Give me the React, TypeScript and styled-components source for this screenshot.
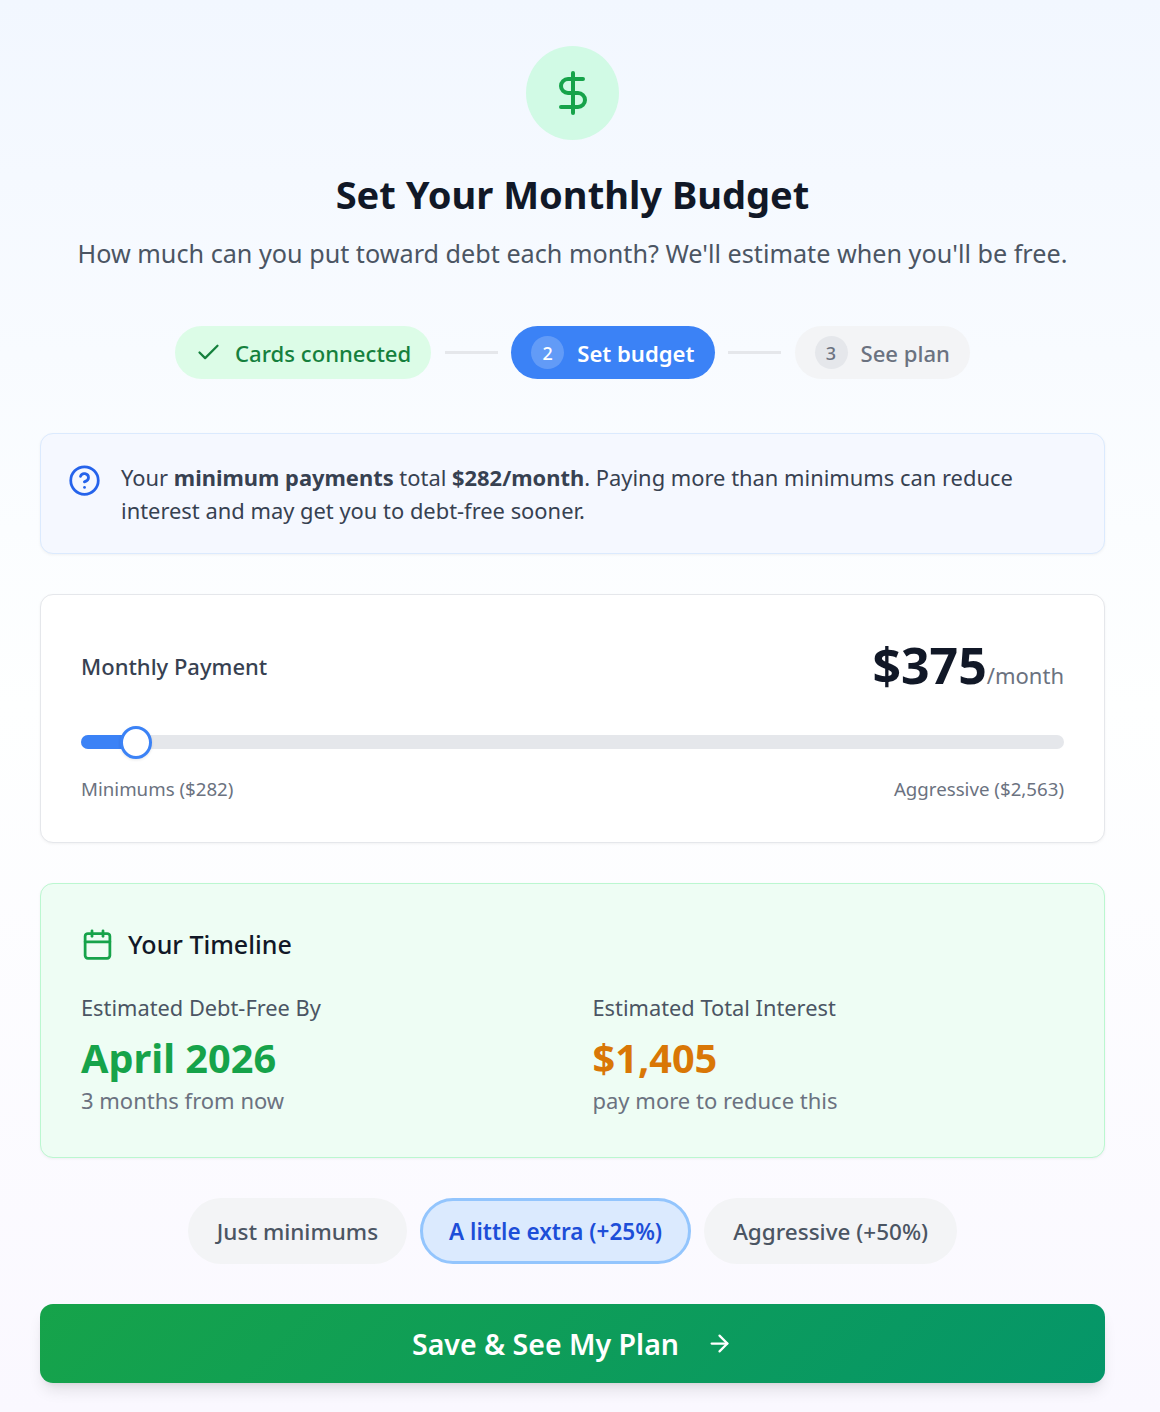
import React from 'react'
import styled, { createGlobalStyle } from 'styled-components'
import { ArrowRight, Calendar, Check, CircleHelp, DollarSign } from 'lucide-react'

const GlobalStyle = createGlobalStyle`
    html, body {
        margin: 0;
        padding: 0;
    }
    body {
        font-family: "Noto Sans", "Open Sans", sans-serif;
        color: #111827;
    }
    * {
        box-sizing: border-box;
    }
`

const Page = styled.div`
    width: 1160px;
    height: 1412px;
    overflow: hidden;
    padding: 46px 55px 0 40px;
    background: linear-gradient(180deg, #f2f7ff 0%, #feffff 50%, #faf8ff 100%);
`

const Header = styled.header`
    display: flex;
    flex-direction: column;
    align-items: center;
`

const IconCircle = styled.div`
    width: 93px;
    height: 94px;
    border-radius: 50%;
    background: #d1fae5;
    color: #16a34a;
    display: flex;
    align-items: center;
    justify-content: center;
`

const Title = styled.h1`
    margin: 29px 0 0;
    font-size: 38.1px;
    line-height: 50px;
    font-weight: 700;
    color: #111827;
`

const Subtitle = styled.p`
    margin: 16px 0 0;
    font-size: 25.2px;
    line-height: 36px;
    color: #4b5563;
`

const Stepper = styled.div`
    margin-top: 55px;
    display: flex;
    justify-content: center;
    align-items: center;
    gap: 13.5px;
`

type StepState = 'done' | 'active' | 'todo'

const stepColors = {
    done: { bg: '#dcfce7', fg: '#15803d' },
    active: { bg: '#3b82f6', fg: '#ffffff' },
    todo: { bg: '#f3f4f6', fg: '#6b7280' },
}

const Step = styled.div<{ $state: StepState }>`
    height: 53px;
    padding: 0 20px;
    border-radius: 27px;
    display: flex;
    align-items: center;
    gap: 13px;
    font-size: 22.1px;
    font-weight: ${({ $state }) => ($state === 'active' ? 600 : 500)};
    background: ${({ $state }) => stepColors[$state].bg};
    color: ${({ $state }) => stepColors[$state].fg};
`

const StepNumber = styled.span<{ $active?: boolean }>`
    width: 33px;
    height: 33px;
    border-radius: 50%;
    display: flex;
    align-items: center;
    justify-content: center;
    font-size: 18px;
    font-weight: 500;
    background: ${({ $active }) => ($active ? 'rgba(255, 255, 255, 0.2)' : '#e5e7eb')};
`

const StepLine = styled.div`
    width: 53px;
    height: 3px;
    background: #e5e7eb;
`

const InfoBox = styled.div`
    margin-top: 54px;
    height: 121px;
    padding: 27px;
    display: flex;
    gap: 20px;
    background: #f5f8ff;
    border: 1px solid #dbeafe;
    border-radius: 13px;
    box-shadow: 0 1px 3px rgba(0, 0, 0, 0.05);
    color: #374151;
    font-size: 21.9px;
    line-height: 33px;
`

const InfoIcon = styled.div`
    flex: none;
    color: #2563eb;
    padding-top: 3px;
    height: 33px;
`

const Card = styled.section`
    margin-top: 40px;
    height: 249px;
    padding: 40px;
    background: #ffffff;
    border: 1px solid #e5e7eb;
    border-radius: 13px;
    box-shadow: 0 1px 3px rgba(0, 0, 0, 0.05);
`

const PaymentRow = styled.div`
    display: flex;
    justify-content: space-between;
    align-items: flex-start;
    height: 64px;
`

const PaymentLabel = styled.div`
    font-size: 22px;
    font-weight: 500;
    line-height: 62px;
    color: #374151;
`

const PaymentValue = styled.div`
    display: flex;
    align-items: baseline;
    font-size: 50px;
    line-height: 60px;
    font-weight: 700;
    color: #111827;
`

const PerMonth = styled.span`
    font-size: 22px;
    font-weight: 400;
    color: #6b7280;
`

const SliderTrack = styled.div`
    position: relative;
    margin-top: 36px;
    height: 14px;
    border-radius: 7px;
    background: #e5e7eb;
`

const SliderFill = styled.div`
    height: 100%;
    border-radius: 7px 0 0 7px;
    background: #3b82f6;
`

const SliderThumb = styled.div`
    position: absolute;
    top: 50%;
    width: 32px;
    height: 33px;
    margin: -16.5px 0 0 -16px;
    border-radius: 50%;
    background: #ffffff;
    border: 3px solid #3b82f6;
    box-shadow: 0 1px 3px rgba(0, 0, 0, 0.1);
`

const RangeLabels = styled.div`
    margin-top: 26px;
    display: flex;
    justify-content: space-between;
    font-size: 18.7px;
    line-height: 27px;
    color: #6b7280;
`

const TimelineCard = styled.section`
    margin-top: 40px;
    height: 275px;
    padding: 40px;
    background: #eefdf4;
    border: 1px solid #bbf7d0;
    border-radius: 13px;
    box-shadow: 0 1px 3px rgba(0, 0, 0, 0.05);
`

const TimelineTitle = styled.h2`
    margin: 0;
    display: flex;
    align-items: center;
    gap: 14px;
    height: 40px;
    font-size: 25px;
    font-weight: 500;
    color: #111827;
    svg {
        color: #16a34a;
    }
`

const StatsGrid = styled.div`
    margin-top: 27px;
    display: grid;
    grid-template-columns: repeat(2, 1fr);
    gap: 40px;
`

const StatLabel = styled.div`
    font-size: 21.8px;
    line-height: 33px;
    color: #4b5563;
`

const StatValue = styled.div<{ $color: string }>`
    font-size: 39.7px;
    line-height: 52px;
    margin-top: 8px;
    font-weight: 700;
    color: ${({ $color }) => $color};
`

const StatNote = styled.div`
    font-size: 22px;
    line-height: 33px;
    color: #6b7280;
`

const Presets = styled.div`
    margin-top: 40px;
    display: flex;
    justify-content: center;
    gap: 13px;
`

const Preset = styled.button<{ $selected?: boolean }>`
    height: 66px;
    padding: 0 26px;
    border-radius: 33px;
    font-family: inherit;
    font-size: 22.5px;
    font-weight: ${({ $selected }) => ($selected ? 600 : 500)};
    border: 3px solid ${({ $selected }) => ($selected ? '#93c5fd' : 'transparent')};
    background: ${({ $selected }) => ($selected ? '#dbeafe' : '#f3f4f6')};
    color: ${({ $selected }) => ($selected ? '#1d4ed8' : '#4b5563')};
`

const SaveButton = styled.button`
    margin-top: 40px;
    width: 100%;
    height: 79px;
    border: none;
    border-radius: 13px;
    display: flex;
    align-items: center;
    justify-content: center;
    gap: 27px;
    font-family: inherit;
    font-size: 28.5px;
    font-weight: 600;
    color: #ffffff;
    background: linear-gradient(135deg, #16a34a 0%, #059669 100%);
    box-shadow: 0 10px 15px -3px rgba(0, 0, 0, 0.1), 0 4px 6px -4px rgba(0, 0, 0, 0.1);
`

const App: React.FC = () => {
    // позиция ползунка на шкале
    const sliderPercent = 5.6

    return (
        <Page>
            <GlobalStyle />
            <Header>
                <IconCircle>
                    <DollarSign size={48} strokeWidth={2} />
                </IconCircle>
                <Title>Set Your Monthly Budget</Title>
                <Subtitle>How much can you put toward debt each month? We'll estimate when you'll be free.</Subtitle>
            </Header>

            <Stepper>
                <Step $state="done">
                    <Check size={27} strokeWidth={2} />
                    Cards connected
                </Step>
                <StepLine />
                <Step $state="active">
                    <StepNumber $active>2</StepNumber>
                    Set budget
                </Step>
                <StepLine />
                <Step $state="todo">
                    <StepNumber>3</StepNumber>
                    See plan
                </Step>
            </Stepper>

            <InfoBox>
                <InfoIcon>
                    <CircleHelp size={33} strokeWidth={2} />
                </InfoIcon>
                <div>
                    Your <strong>minimum payments</strong> total <strong>$282/month</strong>. Paying more than minimums can reduce interest and may get you to debt-free sooner.
                </div>
            </InfoBox>

            <Card>
                <PaymentRow>
                    <PaymentLabel>Monthly Payment</PaymentLabel>
                    <PaymentValue>
                        $375<PerMonth>/month</PerMonth>
                    </PaymentValue>
                </PaymentRow>
                <SliderTrack>
                    <SliderFill style={{ width: `${sliderPercent}%` }} />
                    <SliderThumb style={{ left: `${sliderPercent}%` }} />
                </SliderTrack>
                <RangeLabels>
                    <span>Minimums ($282)</span>
                    <span>Aggressive ($2,563)</span>
                </RangeLabels>
            </Card>

            <TimelineCard>
                <TimelineTitle>
                    <Calendar size={33} strokeWidth={2} />
                    Your Timeline
                </TimelineTitle>
                <StatsGrid>
                    <div>
                        <StatLabel>Estimated Debt-Free By</StatLabel>
                        <StatValue $color="#16a34a">April 2026</StatValue>
                        <StatNote>3 months from now</StatNote>
                    </div>
                    <div>
                        <StatLabel>Estimated Total Interest</StatLabel>
                        <StatValue $color="#d97706">$1,405</StatValue>
                        <StatNote>pay more to reduce this</StatNote>
                    </div>
                </StatsGrid>
            </TimelineCard>

            <Presets>
                <Preset>Just minimums</Preset>
                <Preset $selected>A little extra (+25%)</Preset>
                <Preset>Aggressive (+50%)</Preset>
            </Presets>

            <SaveButton>
                Save &amp; See My Plan
                <ArrowRight size={27} strokeWidth={2} />
            </SaveButton>
        </Page>
    )
}

export default App
